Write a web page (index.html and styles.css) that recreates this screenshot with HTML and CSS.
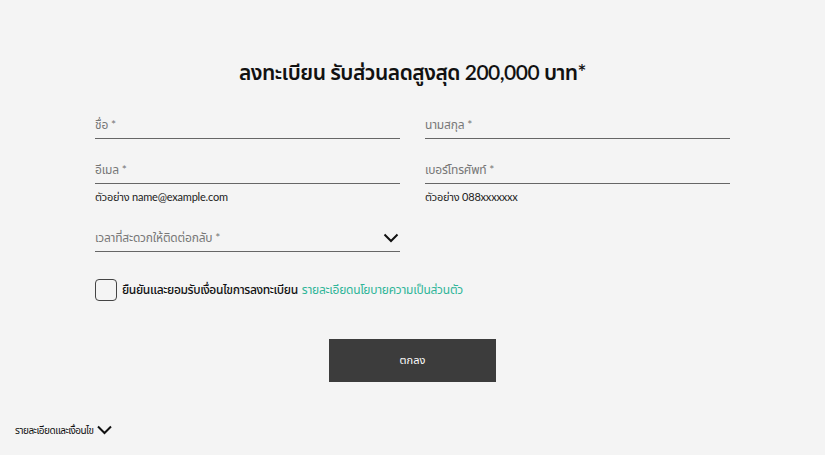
FILE: index.html
```html
<!DOCTYPE html>
<html lang="th">
<head>
<meta charset="utf-8">
<title>ลงทะเบียน</title>
<link rel="stylesheet" href="styles.css">
</head>
<body>
<main class="page">
  <h1 class="title">ลงทะเบียน รับส่วนลดสูงสุด 200,000 บาท*</h1>
  <form class="form">
    <div class="grid">
      <div class="field"><span class="ph">ชื่อ *</span></div>
      <div class="field"><span class="ph">นามสกุล *</span></div>
      <div class="group">
        <div class="field"><span class="ph">อีเมล *</span></div>
        <div class="help">ตัวอย่าง name@example.com</div>
      </div>
      <div class="group">
        <div class="field"><span class="ph">เบอร์โทรศัพท์ *</span></div>
        <div class="help">ตัวอย่าง 088xxxxxxx</div>
      </div>
    </div>
    <div class="field select">
      <span class="ph">เวลาที่สะดวกให้ติดต่อกลับ *</span>
      <svg class="chev" width="16" height="10" viewBox="0 0 16 10"><path d="M1.5 1.5 L8 8 L14.5 1.5" fill="none" stroke="#111" stroke-width="2"/></svg>
    </div>
    <label class="consent">
      <span class="box"></span>
      <span class="consent-text">ยืนยันและยอมรับเงื่อนไขการลงทะเบียน</span>
      <a class="link" href="#">รายละเอียดนโยบายความเป็นส่วนตัว</a>
    </label>
    <div class="actions"><button type="button" class="btn">ตกลง</button></div>
  </form>
  <div class="footer">
    <span>รายละเอียดและเงื่อนไข</span>
    <svg width="15" height="10" viewBox="0 0 15 10"><path d="M1 1.5 L7.5 8 L14 1.5" fill="none" stroke="#111" stroke-width="2"/></svg>
  </div>
</main>
</body>
</html>
```
FILE: styles.css
```css
* { box-sizing: border-box; }
body {
  margin: 0;
  background: #f4f4f4;
  font-family: "Lato", "Noto Sans Thai", "Noto Sans", sans-serif;
  color: #111;
}
.page { width: 825px; height: 455px; overflow: hidden; }
.title {
  margin: 59px 0 0;
  font-size: 21px;
  line-height: 26px;
  font-weight: 600;
  letter-spacing: -0.5px;
  text-align: center;
  color: #111;
}
.form {
  width: 635px;
  margin: 27px auto 0;
}
.grid {
  display: grid;
  grid-template-columns: 305px 305px;
  column-gap: 25px;
  row-gap: 18px;
}
.field {
  height: 27px;
  border-bottom: 1px solid #666;
  font-size: 12px;
  letter-spacing: -0.2px;
  line-height: 26px;
  color: #777;
  display: flex;
  align-items: center;
  justify-content: space-between;
}
.help {
  margin-top: 5px;
  font-size: 11px;
  letter-spacing: -0.2px;
  line-height: 16px;
  color: #222;
}
.select {
  width: 305px;
  margin-top: 20px;
}
.chev { margin-right: 1px; }
.consent {
  display: flex;
  align-items: center;
  margin-top: 27px;
  height: 22px;
  font-size: 12px;
  letter-spacing: -0.35px;
  font-weight: 500;
}
.box {
  width: 22px;
  height: 22px;
  border: 1px solid #444;
  border-radius: 4px;
  margin-right: 5px;
  background: #f4f4f4;
}
.consent-text { color: #111; }
.link { color: #2fb598; text-decoration: none; margin-left: 4px; font-weight: 400; letter-spacing: -0.25px; }
.actions {
  display: flex;
  justify-content: center;
  margin-top: 38px;
}
.btn {
  width: 167px;
  height: 43px;
  background: #3c3c3c;
  color: #fff;
  border: none;
  font-family: inherit;
  font-size: 11px;
}
.footer {
  display: flex;
  align-items: center;
  gap: 3px;
  margin: 41px 0 0 15px;
  font-size: 10px;
  letter-spacing: -0.5px;
  line-height: 14px;
  color: #111;
}
```
